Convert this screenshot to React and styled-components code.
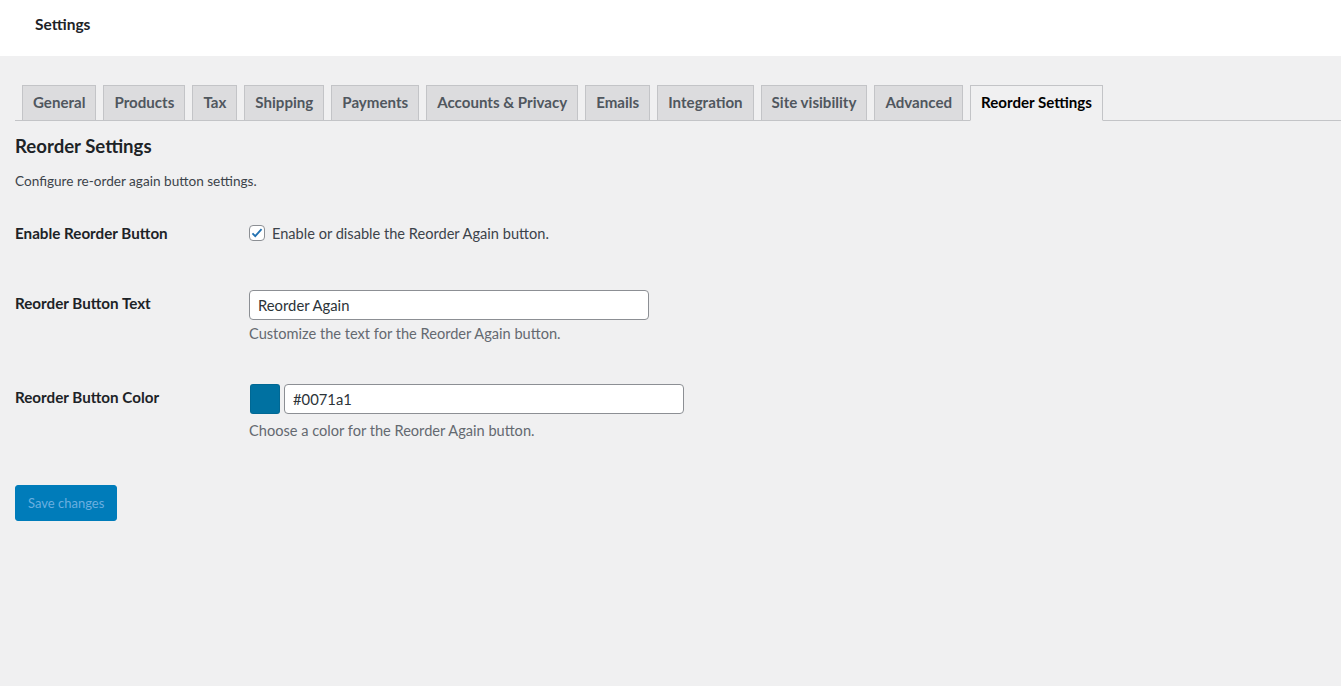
import React, { useState } from 'react'
import styled, { createGlobalStyle } from 'styled-components'

const GlobalStyle = createGlobalStyle`
  html, body {
    margin: 0;
    padding: 0;
    background: #f0f0f1;
    font-family: "Lato", "Noto Sans", sans-serif;
    color: #1d2327;
    font-size: 13px;
  }
  * { box-sizing: border-box; }
`

const Page = styled.div`
  min-height: 686px;
  background: #f0f0f1;
`

const TopBar = styled.header`
  height: 56px;
  background: #fff;
  display: flex;
  align-items: center;
  padding-left: 35px;
`

const PageTitle = styled.h1`
  margin: 0;
  font-size: 15.5px;
  font-weight: 700;
  color: #1d2327;
  padding-bottom: 8px;
`

const Wrap = styled.div`
  padding: 29px 0 0 15px;
`

const TabBar = styled.nav`
  display: flex;
  gap: 7px;
  padding-left: 7px;
  border-bottom: 1px solid #c3c4c7;
`

const Tab = styled.a`
  display: block;
  height: 36px;
  line-height: 33px;
  padding: 0 10px;
  margin-bottom: -1px;
  font-size: 15.1px;
  font-weight: 700;
  text-decoration: none;
  cursor: pointer;
  border: 1px solid #c3c4c7;
  border-bottom-color: ${p => (p.$active ? '#f0f0f1' : '#c3c4c7')};
  background: ${p => (p.$active ? '#f0f0f1' : '#dcdcde')};
  color: ${p => (p.$active ? '#000' : '#50575e')};
`

const SectionTitle = styled.h2`
  margin: 14px 0 0;
  font-size: 18.6px;
  font-weight: 700;
  line-height: 22px;
  color: #1d2327;
`

const Intro = styled.p`
  margin: 15px 0 0;
  font-size: 13.6px;
  line-height: 18px;
  color: #3c434a;
`

const Form = styled.form`
  padding-top: 10px;
`

const Row = styled.div`
  display: grid;
  grid-template-columns: 234px 1fr;
  align-items: start;
  padding: ${p => p.$top ?? 22}px 0 ${p => p.$bottom ?? 22}px;
`

const Label = styled.label`
  font-size: 15.2px;
  font-weight: 700;
  line-height: 22px;
  color: #1d2327;
  padding-top: ${p => p.$offset || 0}px;
`

const CheckLine = styled.label`
  display: flex;
  align-items: center;
  gap: 7px;
  height: 22px;
  font-size: 14.6px;
  color: #3c434a;
`

const CheckBox = styled.span`
  width: 16px;
  height: 16px;
  border: 1px solid #8c8f94;
  border-radius: 4px;
  background: #fff;
  display: flex;
  align-items: center;
  justify-content: center;
`

const TextInput = styled.input`
  width: 400px;
  height: 30px;
  padding: 0 8px;
  border: 1px solid #8c8f94;
  border-radius: 4px;
  background: #fff;
  font-family: inherit;
  font-size: 14.8px;
  color: #2c3338;
  outline: none;
`

const ColorLine = styled.div`
  display: flex;
  align-items: center;
  gap: 4px;
  padding-left: 1px;
`

const Swatch = styled.span`
  width: 30px;
  height: 30px;
  border-radius: 3px;
  background: ${p => p.$color};
  border: 1px solid rgba(0, 0, 0, 0.08);
`

const Hint = styled.p`
  margin: ${p => p.$gap ?? 4}px 0 0;
  font-size: 14.6px;
  line-height: 20px;
  color: #646970;
`

const SaveButton = styled.button`
  height: 36px;
  padding: 0 12px;
  border: 1px solid #007cba;
  border-radius: 3px;
  background: #007cba;
  color: #6aafe0;
  font-family: inherit;
  font-size: 13px;
  cursor: default;
`

const tabs = [
  'General',
  'Products',
  'Tax',
  'Shipping',
  'Payments',
  'Accounts & Privacy',
  'Emails',
  'Integration',
  'Site visibility',
  'Advanced',
  'Reorder Settings',
]

const App = () => {
  const [text, setText] = useState('Reorder Again')
  const [color, setColor] = useState('#0071a1')

  return (
    <>
      <GlobalStyle />
      <Page>
        <TopBar>
          <PageTitle>Settings</PageTitle>
        </TopBar>
        <Wrap>
          <TabBar>
            {tabs.map(t => (
              <Tab key={t} $active={t === 'Reorder Settings'}>{t}</Tab>
            ))}
          </TabBar>

          <SectionTitle>Reorder Settings</SectionTitle>
          <Intro>Configure re-order again button settings.</Intro>

          <Form onSubmit={e => e.preventDefault()}>
            <Row>
              <Label>Enable Reorder Button</Label>
              <CheckLine>
                <CheckBox>
                  <svg width="14" height="14" viewBox="0 0 20 20">
                    <path d="M3.5 10.5l4 4 9-10" fill="none" stroke="#2271b1" strokeWidth="2.6" />
                  </svg>
                </CheckBox>
                Enable or disable the Reorder Again button.
              </CheckLine>
            </Row>

            <Row $top={24}>
              <Label $offset={2}>Reorder Button Text</Label>
              <div>
                <TextInput value={text} onChange={e => setText(e.target.value)} />
                <Hint>Customize the text for the Reorder Again button.</Hint>
              </div>
            </Row>

            <Row $top={18} $bottom={44}>
              <Label $offset={2}>Reorder Button Color</Label>
              <div>
                <ColorLine>
                  <Swatch $color={color} />
                  <TextInput value={color} onChange={e => setColor(e.target.value)} />
                </ColorLine>
                <Hint $gap={7}>Choose a color for the Reorder Again button.</Hint>
              </div>
            </Row>

            <SaveButton type="submit" disabled>Save changes</SaveButton>
          </Form>
        </Wrap>
      </Page>
    </>
  )
}

export default App
